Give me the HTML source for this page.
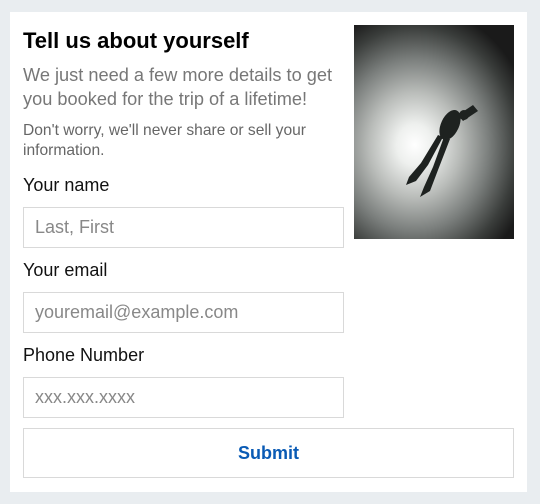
<!DOCTYPE html>
<html><head><style>
body{margin:0;width:540px;height:504px;background:#e9edf0;font-family:"Liberation Sans",sans-serif;position:relative;overflow:hidden}
.card{position:absolute;left:10px;top:12px;width:517px;height:480px;background:#fff}
.a{position:absolute;left:23px}
h1{position:absolute;left:23px;top:28px;margin:0;font-size:22px;font-weight:bold;color:#000}
.sub{top:63px;font-size:18.2px;line-height:24px;color:#777;width:330px}
.sm{top:121px;font-size:15.6px;line-height:20px;color:#666;width:330px}
.lb{font-size:18px;color:#111}
.in{position:absolute;left:23px;height:39px;border:1px solid #d9d9d9;font-size:18px;color:#888;line-height:39px;padding-left:11px;width:308px}
.btn{position:absolute;left:23px;top:428px;width:489px;height:48px;border:1px solid #d9d9d9;text-align:center;line-height:48px;color:#0a5bb5;font-weight:bold;font-size:18px}
.img{position:absolute;left:354px;top:25px;width:160px;height:214px;background:radial-gradient(ellipse 75% 65% at 38% 56%,#fff 0,#eef0ee 15%,#b9bcb9 38%,#7a7e7c 62%,#3a3d3b 85%,#1a1a1a 100%)}
</style></head><body>
<div class="card"></div>
<h1>Tell us about yourself</h1>
<div class="a sub">We just need a few more details to get you booked for the trip of a lifetime!</div>
<div class="a sm">Don't worry, we'll never share or sell your information.</div>
<div class="a lb" style="top:175px">Your name</div>
<div class="in" style="top:207px">Last, First</div>
<div class="a lb" style="top:260px">Your email</div>
<div class="in" style="top:292px">youremail@example.com</div>
<div class="a lb" style="top:345px">Phone Number</div>
<div class="in" style="top:377px">xxx.xxx.xxxx</div>
<div class="btn">Submit</div>
<div class="img"><svg width="160" height="214" viewBox="0 0 160 214"><g fill="#1e2220"><ellipse cx="96" cy="100" rx="9" ry="16" transform="rotate(25 96 100)"/><circle cx="110" cy="90" r="5"/><path d="M89 112 L74 140 L62 156 L52 160 L55 152 L67 138 L84 110Z"/><path d="M96 114 L84 145 L76 166 L66 172 L70 162 L79 142 L90 112Z"/><path d="M104 90 L119 80 L124 86 L109 96Z"/></g></svg></div>
</body></html>
